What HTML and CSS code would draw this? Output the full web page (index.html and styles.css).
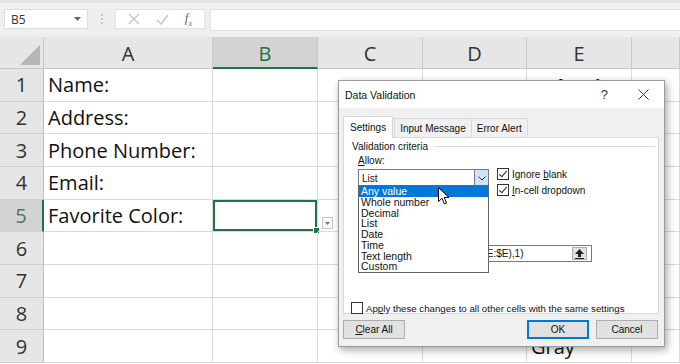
FILE: index.html
```html
<!DOCTYPE html>
<html lang="en">
<head>
    <meta charset="UTF-8">
    <title>Data Validation</title>
    <link rel="stylesheet" href="styles.css">
</head>
<body>
    <div class="toolbar">
        <div class="name-box">
            <span>B5</span>
            <svg class="nb-arrow" width="7" height="4" viewBox="0 0 7 4"><path d="M0 0h7L3.5 4z" fill="#666"/></svg>
        </div>
        <div class="grip"><i></i><i></i><i></i></div>
        <div class="fx-buttons">
            <svg width="12" height="12" viewBox="0 0 12 12"><path d="M1 1l10 10M11 1L1 11" stroke="#c4c4c4" stroke-width="1.3"/></svg>
            <svg width="13" height="11" viewBox="0 0 13 11"><path d="M1 6l4 4 7-9" stroke="#c4c4c4" stroke-width="1.4" fill="none"/></svg>
            <span class="fx">f<sub>x</sub></span>
        </div>
        <div class="formula"></div>
    </div>

    <div class="sheet">
        <div class="hdr corner"><svg width="20" height="20" viewBox="0 0 20 20"><path d="M20 0v20H0z" fill="#b5b5b5"/></svg></div>
        <div class="hdr">A</div>
        <div class="hdr sel">B</div>
        <div class="hdr">C</div>
        <div class="hdr">D</div>
        <div class="hdr">E</div>
        <div class="hdr"></div>

        <div class="rh">1</div><div class="cell">Name:</div><div class="cell"></div><div class="cell"></div><div class="cell"></div><div class="cell bold">Selection</div><div class="cell"></div>
        <div class="rh">2</div><div class="cell">Address:</div><div class="cell"></div><div class="cell"></div><div class="cell"></div><div class="cell"></div><div class="cell"></div>
        <div class="rh">3</div><div class="cell">Phone Number:</div><div class="cell"></div><div class="cell"></div><div class="cell"></div><div class="cell"></div><div class="cell"></div>
        <div class="rh">4</div><div class="cell">Email:</div><div class="cell"></div><div class="cell"></div><div class="cell"></div><div class="cell"></div><div class="cell"></div>
        <div class="rh sel">5</div><div class="cell">Favorite Color:</div>
        <div class="cell active">
            <span class="handle"></span>
            <span class="cell-drop"><svg width="5" height="3" viewBox="0 0 5 3"><path d="M0 0h5L2.5 3z" fill="#777"/></svg></span>
        </div>
        <div class="cell"></div><div class="cell"></div><div class="cell"></div><div class="cell"></div>
        <div class="rh">6</div><div class="cell"></div><div class="cell"></div><div class="cell"></div><div class="cell"></div><div class="cell"></div><div class="cell"></div>
        <div class="rh">7</div><div class="cell"></div><div class="cell"></div><div class="cell"></div><div class="cell"></div><div class="cell"></div><div class="cell"></div>
        <div class="rh">8</div><div class="cell"></div><div class="cell"></div><div class="cell"></div><div class="cell"></div><div class="cell"></div><div class="cell"></div>
        <div class="rh">9</div><div class="cell"></div><div class="cell"></div><div class="cell"></div><div class="cell"></div><div class="cell">Gray</div><div class="cell"></div>
    </div>

    <!-- Data Validation dialog, floating over the sheet -->
    <div class="dialog">
        <div class="dlg-title">
            <span>Data Validation</span>
            <span class="help">?</span>
            <svg class="close" width="11" height="11" viewBox="0 0 11 11"><path d="M0.5 0.5l10 10M10.5 0.5l-10 10" stroke="#333" stroke-width="1"/></svg>
        </div>
        <div class="tabs">
            <div class="tab active">Settings</div>
            <div class="tab">Input Message</div>
            <div class="tab">Error Alert</div>
        </div>
        <div class="panel">
            <div class="legend">Validation criteria</div>
            <div class="criteria">
                <div class="allow">
                    <div class="label"><span><u>A</u>llow:</span></div>
                    <div class="combo">
                        <span>List</span>
                        <span class="combo-btn"><svg width="8" height="5" viewBox="0 0 8 5"><path d="M0.5 0.5l3.5 3.5 3.5-3.5" stroke="#333" fill="none"/></svg></span>
                    </div>
                </div>
                <div class="checks">
                    <div class="check"><span class="box on"></span><span>Ignore <u>b</u>lank</span></div>
                    <div class="check"><span class="box on"></span><span><u>I</u>n-cell dropdown</span></div>
                </div>
            </div>
            <div class="source">
                <div class="source-field">=OFFSET($E$2,0,0,COUNTA($E:$E),1)</div>
                <span class="source-btn"><svg width="9" height="10" viewBox="0 0 9 10"><path d="M4.5 0L0 5h3v3h3V5h3z" fill="#222"/><path d="M0 9.5h9" stroke="#222"/></svg></span>
            </div>
            <div class="check apply"><span class="box"></span><span>Ap<u>p</u>ly these changes to all other cells with the same settings</span></div>

            <ul class="droplist">
                <li class="hl">Any value</li>
                <li>Whole number</li>
                <li>Decimal</li>
                <li>List</li>
                <li>Date</li>
                <li>Time</li>
                <li>Text length</li>
                <li>Custom</li>
            </ul>
            <svg class="cursor" width="12" height="18" viewBox="0 0 12 18"><path d="M0.5 0.5v14l3.5-3.2 2.4 5.6 2.2-1-2.4-5.4h4.8z" fill="#fff" stroke="#000" stroke-width="1"/></svg>
        </div>
        <div class="buttons">
            <button class="btn"><u>C</u>lear All</button>
            <span class="spacer"></span>
            <button class="btn ok">OK</button>
            <button class="btn">Cancel</button>
        </div>
    </div>
</body>
</html>
```

FILE: styles.css
```css
body {
    margin: 0;
    font-family: 'Open Sans', sans-serif;
    background: #fff;
    width: 680px;
    height: 364px;
    overflow: hidden;
    position: relative;
}

/* formula bar */
.toolbar {
    display: flex;
    align-items: flex-start;
    height: 37px;
    box-sizing: border-box;
    padding: 6px 0 0 4px;
    background: #efefef;
    border-top: 3px solid #e3e3e3;
}
.name-box {
    width: 84px;
    height: 20px;
    box-sizing: border-box;
    background: #fff;
    border: 1px solid #dcdcdc;
    display: flex;
    align-items: center;
    padding: 0 6px;
    font-size: 12px;
    color: #333;
}
.name-box span { flex: 1; }
.grip {
    width: 27px;
    height: 20px;
    display: flex;
    flex-direction: column;
    align-items: center;
    justify-content: center;
    gap: 2px;
}
.grip i {
    width: 2px;
    height: 2px;
    background: #c8c8c8;
}
.fx-buttons {
    width: 90px;
    height: 20px;
    box-sizing: border-box;
    background: #fff;
    border: 1px solid #e2e2e2;
    display: flex;
    align-items: center;
    justify-content: space-around;
    padding: 0 4px;
}
.fx {
    font-family: 'Liberation Serif', serif;
    font-style: italic;
    font-size: 13px;
    color: #666;
}
.fx sub { font-size: 8px; }
.formula {
    flex: 1;
    height: 20px;
    margin-left: 5px;
    background: #fff;
    border: 1px solid #e2e2e2;
    border-right: none;
}

/* sheet grid */
.sheet {
    display: grid;
    grid-template-columns: 44px 169px 105px 105px 104px 105px 1fr;
    grid-template-rows: 32px repeat(9, 32.67px);
}
.hdr, .rh {
    background: #e6e6e6;
    color: #333;
    font-size: 20px;
    display: flex;
    align-items: center;
    justify-content: center;
    box-sizing: border-box;
    border-right: 1px solid #c9c9c9;
    border-bottom: 1px solid #c9c9c9;
}
.hdr { padding-top: 2px; }
.hdr.sel {
    background: #d3d3d3;
    color: #217346;
    border-bottom: 2px solid #217346;
}
.corner {
    align-items: flex-end;
    justify-content: flex-end;
    padding: 0 3px 3px 0;
}
.rh {
    border-right-color: #bdbdbd;
    border-bottom-color: #d0d0d0;
}
.rh.sel {
    background: #d3d3d3;
    color: #4a7a5e;
    border-right: 2px solid #217346;
}
.cell {
    box-sizing: border-box;
    border-right: 1px solid #dadada;
    border-bottom: 1px solid #dadada;
    font-size: 20px;
    color: #111;
    padding: 0 0 0 4px;
    display: flex;
    align-items: center;
    white-space: nowrap;
    position: relative;
}
.cell.bold {
    font-weight: 700;
    padding: 4px 0 0 8px;
}
.cell.active {
    box-shadow: inset 0 0 0 2px #217346;
    overflow: visible;
}
.handle {
    position: absolute;
    right: -3px;
    bottom: -3px;
    width: 5px;
    height: 5px;
    background: #217346;
    border: 1px solid #fff;
}
.cell-drop {
    position: absolute;
    right: -16px;
    bottom: 2px;
    width: 11px;
    height: 12px;
    box-sizing: border-box;
    border: 1px solid #c6c6c6;
    background: #fafafa;
    display: flex;
    align-items: center;
    justify-content: center;
}

/* dialog */
.dialog {
    position: absolute;
    left: 338px;
    top: 80px;
    width: 327px;
    height: 267px;
    box-sizing: border-box;
    background: #f0f0f0;
    border: 1px solid #9a9a9a;
    box-shadow: 2px 3px 8px rgba(0,0,0,0.35);
    font-family: 'Liberation Sans', sans-serif;
    font-size: 10px;
    color: #111;
    display: flex;
    flex-direction: column;
}
.dlg-title {
    height: 27px;
    background: #fff;
    display: flex;
    align-items: center;
    padding-left: 6px;
    font-size: 10.5px;
}
.dlg-title span:first-child { flex: 1; }
.help {
    font-size: 13px;
    color: #333;
    margin-right: 30px;
}
.close { margin-right: 15px; }
.tabs {
    display: flex;
    align-items: flex-end;
    margin: 8px 0 0 4px;
    height: 21px;
}
.tab {
    height: 19px;
    box-sizing: border-box;
    padding: 0 5px;
    display: flex;
    align-items: center;
    border: 1px solid #d9d9d9;
    border-bottom: none;
    background: #f0f0f0;
    margin-right: -1px;
}
.tab.active {
    height: 22px;
    padding: 0 6px;
    background: #fff;
    position: relative;
    top: 1px;
    margin-right: 1px;
    z-index: 1;
}
.panel {
    position: relative;
    margin-left: 4px;
    width: 316px;
    height: 177px;
    box-sizing: border-box;
    background: #fff;
    border: 1px solid #d9d9d9;
    padding-top: 1px;
}
.legend {
    display: flex;
    align-items: center;
    height: 14px;
    padding-left: 8px;
    padding-right: 3px;
}
.legend::after {
    content: "";
    flex: 1;
    height: 1px;
    margin-left: 6px;
    background: #dcdcdc;
}
.criteria {
    display: flex;
    padding-left: 14px;
}
.allow { width: 131px; }
.label {
    height: 13px;
    margin: 1px 0 2px;
    display: flex;
    align-items: center;
}
.combo {
    height: 18px;
    box-sizing: border-box;
    border: 1px solid #7a7a7a;
    display: flex;
    align-items: center;
    padding-left: 3px;
}
.combo span:first-child { flex: 1; }
.combo-btn {
    width: 13px;
    height: 16px;
    background: #cce4f7;
    border-left: 1px solid #7a7a7a;
    display: flex;
    align-items: center;
    justify-content: center;
}
.checks {
    margin-left: 8px;
    padding-top: 15px;
    display: flex;
    flex-direction: column;
    gap: 4px;
}
.check {
    display: flex;
    align-items: center;
    height: 12px;
    white-space: nowrap;
}
.box {
    flex: none;
    width: 12px;
    height: 12px;
    box-sizing: border-box;
    border: 1px solid #333;
    background: #fff;
    margin-right: 3px;
    position: relative;
}
.box.on::after {
    content: "";
    position: absolute;
    left: 3px;
    top: 0;
    width: 3px;
    height: 7px;
    border: solid #222;
    border-width: 0 1.3px 1.3px 0;
    transform: rotate(40deg);
}
.source {
    display: flex;
    align-items: center;
    margin: 49px 0 0 14px;
    width: 234px;
    height: 17px;
    box-sizing: border-box;
    border: 1px solid #7a7a7a;
}
.source-field {
    flex: 1;
    text-indent: -14px;
    white-space: nowrap;
    overflow: hidden;
}
.source-btn {
    width: 15px;
    height: 13px;
    margin-right: 4px;
    box-sizing: border-box;
    border: 1px solid #adadad;
    background: #e1e1e1;
    display: flex;
    align-items: center;
    justify-content: center;
}
.apply {
    margin: 40px 0 0 7px;
    font-size: 9.7px;
}

.droplist {
    position: absolute;
    left: 14px;
    top: 47px;
    width: 131px;
    margin: 0;
    padding: 0;
    list-style: none;
    background: #fff;
    border: 1px solid #646464;
    box-sizing: border-box;
    font-size: 10.5px;
}
.droplist li {
    height: 10.75px;
    line-height: 10.75px;
    padding-left: 2px;
    white-space: nowrap;
}
.droplist li.hl {
    background: #0078d7;
    color: #fff;
}
.cursor {
    position: absolute;
    left: 94px;
    top: 49px;
}
.buttons {
    display: flex;
    margin: 6px 6px 0 4px;
    gap: 7px;
}
.spacer { flex: 1; }
.btn {
    width: 62px;
    height: 19px;
    box-sizing: border-box;
    background: #e1e1e1;
    border: 1px solid #adadad;
    font-family: 'Liberation Sans', sans-serif;
    font-size: 10px;
    color: #111;
    padding: 0;
}
.btn.ok { border: 2px solid #0078d7; }
```
